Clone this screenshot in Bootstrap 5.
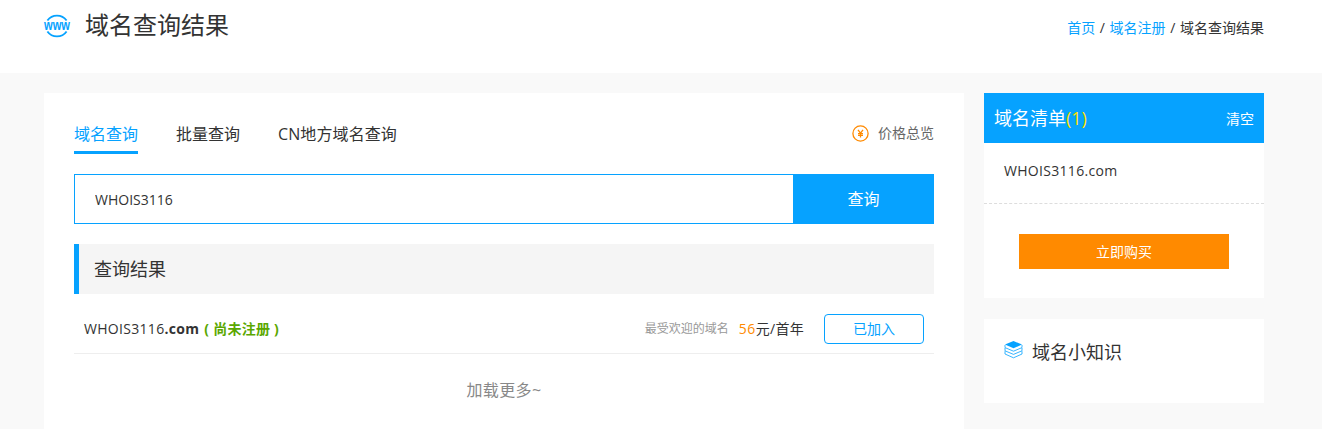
<!DOCTYPE html>
<html lang="zh">
<head>
<meta charset="utf-8">
<title>域名查询结果</title>
<link href="https://cdn.jsdelivr.net/npm/bootstrap@5.3.0/dist/css/bootstrap.min.css" rel="stylesheet">
<style>
html,body{height:429px;overflow:hidden}
body{background:#f9f9f9;color:#333;font-family:"Open Sans","Noto Sans CJK SC",sans-serif;font-size:14px}
a{text-decoration:none}
.top-bar{background:#fff;height:73px}
.wrap-1220{width:1220px;margin-left:44px}
.top-icon{width:26px;height:26px;margin-top:13px;overflow:visible}
.top-title{font-size:24px;font-weight:400;line-height:26px;margin:12px 0 0 15px;color:#333}
.crumbs{font-size:14px;line-height:18px;margin-top:19px;color:#333}
.crumbs a{color:#06a2ff}
.crumbs span{margin:0 1px}
.body-row{padding-top:20px}
.main-panel{width:920px;height:336px;background:#fff;padding:20px 30px}
.tab-row{height:41px}
.tab-item{font-size:16px;line-height:22px;color:#333;padding:10px 0 6px;margin-right:38px}
.tab-item.on{color:#06a2ff;border-bottom:3px solid #06a2ff}
.tab-item.wide{letter-spacing:.1px}
.price-link{font-size:14px;color:#666;line-height:20px;margin-top:10px}
.price-link svg{margin-right:9px}
.search-row{margin-top:20px;height:50px;border:1px solid #06a2ff}
.search-input{flex:1;min-width:0;border:0;outline:0;padding:0 20px;font-size:14px;color:#333;font-family:inherit}
.search-btn{width:141px;background:#06a2ff;color:#fff;border:0;font-size:16px;margin:-1px;font-family:inherit}
.result-head{margin-top:20px;height:50px;background:#f5f5f5;border-left:5px solid #06a2ff;padding-left:15px;font-size:18px;line-height:50px;color:#333}
.result-row{height:60px;border-bottom:1px solid #eee;padding:10px 10px 0}
.domain-name{font-size:14px;color:#333;letter-spacing:.3px}
.domain-state{color:#5aa700;font-weight:700;font-size:14px;margin-left:5px;letter-spacing:.25px}
.popular{font-size:12px;color:#999;margin-right:10px}
.price-num{color:#ff8a00;font-size:14px;letter-spacing:.4px}
.price-unit{font-size:14px;color:#333;margin-right:20px;letter-spacing:.3px}
.added-btn{width:100px;height:30px;border:1px solid #06a2ff;border-radius:4px;color:#06a2ff;font-size:14px;line-height:28px;padding:0;background:#fff}
.load-more{color:#888;font-size:16px;text-align:center;padding-top:24px;letter-spacing:.4px}
.side-col{width:280px;margin-left:20px}
.cart-head{height:50px;background:#06a2ff;color:#fff;padding:0 10px;font-size:18px}
.cart-head b{font-weight:400;color:#ffe000}
.cart-clear{font-size:14px}
.cart-box{background:#fff;height:155px}
.cart-item{height:61px;border-bottom:1px dashed #ddd;padding:18px 20px 0;font-size:14px;line-height:20px;letter-spacing:.3px}
.buy-btn{display:block;width:210px;height:35px;line-height:35px;margin:30px auto 0;background:#ff8a00;color:#fff;text-align:center;font-size:14px}
.tip-box{background:#fff;height:84px;margin-top:21px;padding:21px 20px 0;font-size:18px;line-height:24px;color:#333}
.tip-box svg{margin-right:9px;flex:none}
.icon-label{font:700 14px "Liberation Sans",sans-serif;fill:#06a2ff}
</style>
</head>
<body>
<div class="top-bar">
  <div class="wrap-1220 d-flex justify-content-between">
    <div class="d-flex">
      <svg class="top-icon" viewBox="0 0 26 26" fill="none">
        <path d="M3.4 7.5A11.8 11.8 0 0 1 22.6 7.5M22.6 18.5A11.8 11.8 0 0 1 3.4 18.5" stroke="#06a2ff" stroke-width="1.8"/>
        <text class="icon-label" x="13" y="17" text-anchor="middle" textLength="26" lengthAdjust="spacingAndGlyphs">www</text>
      </svg>
      <h1 class="top-title">域名查询结果</h1>
    </div>
    <div class="crumbs"><a href="#">首页</a> <span>/</span> <a href="#">域名注册</a> <span>/</span> 域名查询结果</div>
  </div>
</div>
<div class="wrap-1220 body-row d-flex align-items-start">
  <div class="main-panel">
    <div class="tab-row d-flex justify-content-between align-items-start">
      <div class="d-flex">
        <a class="tab-item on" href="#">域名查询</a>
        <a class="tab-item" href="#">批量查询</a>
        <a class="tab-item wide" href="#">CN地方域名查询</a>
      </div>
      <a class="price-link d-flex align-items-center" href="#">
        <svg width="17" height="17" viewBox="0 0 17 17" fill="none"><circle cx="8.5" cy="8.5" r="7.6" stroke="#ff8a00" stroke-width="1.3"/><path d="M6 4.8L8.5 8.2 11 4.8M8.5 8.2v4.2M6 8.6h5M6 10.4h5" stroke="#ff8a00" stroke-width="1.3"/></svg>
        价格总览
      </a>
    </div>
    <div class="search-row d-flex">
      <input class="search-input" value="WHOIS3116">
      <button class="search-btn">查询</button>
    </div>
    <div class="result-head">查询结果</div>
    <div class="result-row d-flex align-items-center justify-content-between">
      <div><span class="domain-name">WHOIS3116<strong>.com</strong></span><span class="domain-state">( 尚未注册 )</span></div>
      <div class="d-flex align-items-center">
        <span class="popular">最受欢迎的域名</span>
        <span class="price-num">56</span><span class="price-unit">元/首年</span>
        <button class="added-btn">已加入</button>
      </div>
    </div>
    <div class="load-more">加载更多~</div>
  </div>
  <div class="side-col">
    <div class="cart-head d-flex justify-content-between align-items-center">
      <div>域名清单<b>(1)</b></div>
      <a class="cart-clear text-white" href="#">清空</a>
    </div>
    <div class="cart-box">
      <div class="cart-item">WHOIS3116.com</div>
      <a class="buy-btn" href="#">立即购买</a>
    </div>
    <div class="tip-box d-flex align-items-start">
      <svg width="19" height="19" viewBox="0 0 19 19" fill="none">
        <path d="M9.5 1L18 4.6 9.5 8.2 1 4.6z" fill="#06a2ff"/>
        <path d="M1 5v2.6l8.5 3.6L18 7.6V5M1 8v2.8l8.5 3.6 8.5-3.6V8M1 11.2v2.8l8.5 3.8 8.5-3.8v-2.8" stroke="#06a2ff" stroke-opacity=".8"/>
      </svg>
      域名小知识
    </div>
  </div>
</div>
</body>
</html>
